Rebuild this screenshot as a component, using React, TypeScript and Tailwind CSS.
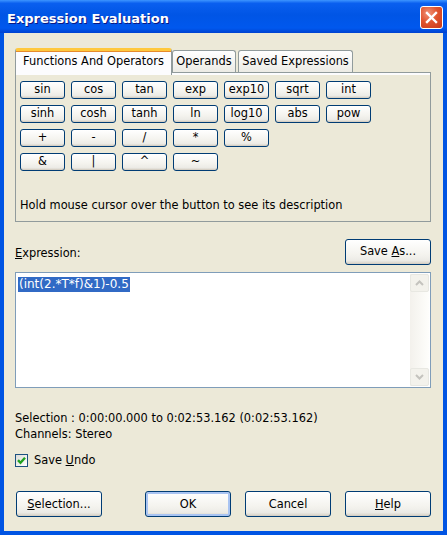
import React from 'react';

const font = "font-['Tahoma','DejaVu_Sans',sans-serif]";

function XpButton({
  children,
  className = '',
  isDefault = false,
}: {
  children: React.ReactNode;
  className?: string;
  isDefault?: boolean;
}) {
  return (
    <div
      className={`flex items-center justify-center border border-[#003c74] rounded-[3px] bg-[linear-gradient(180deg,#ffffff_0%,#f4f3ee_60%,#ecebe6_85%,#d6d0c5_100%)] text-black ${
        isDefault ? 'shadow-[inset_0_0_0_2px_#a9c4f2]' : 'shadow-[inset_0_-1px_0_#d6d0c5]'
      } ${className}`}
    >
      <span>{children}</span>
    </div>
  );
}

const rows = [
  ['sin', 'cos', 'tan', 'exp', 'exp10', 'sqrt', 'int'],
  ['sinh', 'cosh', 'tanh', 'ln', 'log10', 'abs', 'pow'],
  ['+', '-', '/', '*', '%'],
  ['&', '|', '^', '~'],
];

export default function App() {
  return (
    <div className={`w-[447px] h-[535px] flex flex-col bg-[#0054e3] ${font} text-[11.4px] text-black`}>
      {/* Title bar */}
      <div className="h-[33px] shrink-0 flex items-center justify-between pl-[7px] pr-[5px] bg-[linear-gradient(180deg,#3d95ff_0%,#0a5fef_10%,#0055e5_45%,#0058ee_85%,#0042d0_100%)]">
        <span className="text-white font-bold text-[13px] font-['DejaVu_Sans',sans-serif] [text-shadow:1px_1px_0_#0a1883] pt-[5px]">
          Expression Evaluation
        </span>
        <div className="w-[23px] h-[23px] mt-[1px] mr-[-1px] rounded-[3px] border border-white bg-[radial-gradient(circle_at_35%_30%,#f0947a_0%,#e0542e_45%,#c8391a_100%)] flex items-center justify-center">
          <svg width="13" height="13" viewBox="0 0 13 13">
            <path d="M2 2 L11 11 M11 2 L2 11" stroke="white" strokeWidth="2.4" strokeLinecap="square" />
          </svg>
        </div>
      </div>

      {/* Body */}
      <div className="flex-1 mx-[4px] mb-[4px] bg-[#ece9d8] pl-[11px] pr-[12px] pt-[15px] flex flex-col">
        {/* Tabs */}
        <div className="h-[24px] flex items-start">
          <div className="relative z-10 h-[27px] w-[157px] bg-[#fcfcfe] border-x border-[#919b9c] rounded-t-[3px] border-t-[3px] border-t-[#ffc83c] shadow-[inset_0_1px_0_#e68b2c] flex items-center justify-center pb-[2px]">
            Functions And Operators
          </div>
          <div className="mt-[2px] h-[22px] w-[64px] bg-[linear-gradient(180deg,#ffffff,#ecebe5)] border border-b-0 border-[#919b9c] rounded-t-[3px] flex items-center justify-center">
            Operands
          </div>
          <div className="ml-[2px] mt-[2px] h-[22px] w-[115px] bg-[linear-gradient(180deg,#ffffff,#ecebe5)] border border-b-0 border-[#919b9c] rounded-t-[3px] flex items-center justify-center">
            Saved Expressions
          </div>
        </div>
        <div className="h-[150px] border border-[#919b9c] bg-[#ece9d8] shadow-[inset_0_2px_0_#fcfcfe] pl-[4px] pt-[8px] flex flex-col">
          <div className="flex flex-col gap-[6px]">
            {rows.map((row, i) => (
              <div key={i} className="flex gap-[6px]">
                {row.map((b) => (
                  <XpButton key={b} className="w-[45px] h-[18px]">
                    {b}
                  </XpButton>
                ))}
              </div>
            ))}
          </div>
          <div className="mt-[26px]">Hold mouse cursor over the button to see its description</div>
        </div>

        {/* Expression */}
        <div className="mt-[17px] flex items-end justify-between">
          <span className="mb-[3px]">
            <span className="underline">E</span>xpression:
          </span>
          <XpButton className="w-[86px] h-[26px]">
            Save <span className="underline">A</span>s...
          </XpButton>
        </div>
        <div className="mt-[7px] h-[116px] border border-[#7f9db9] bg-white flex">
          <div className="flex-1 pl-[2px] pt-[3px]">
            <span className="bg-[#316ac5] text-white text-[12px] px-[1px] leading-[15px] inline-block">(int(2.*T*f)&amp;1)-0.5</span>
          </div>
          <div className="w-[19px] mr-[1px] my-[1px] flex flex-col justify-between bg-[linear-gradient(90deg,#f3f1ec,#fefefb)]">
            <div className="h-[18px] border border-[#e8e8e2] rounded-[2px] bg-[#f3f2ec] flex items-center justify-center">
              <svg width="9" height="6" viewBox="0 0 9 6">
                <path d="M1 5 L4.5 1.5 L8 5" stroke="#c4c3be" strokeWidth="2" fill="none" />
              </svg>
            </div>
            <div className="h-[18px] border border-[#e8e8e2] rounded-[2px] bg-[#f3f2ec] flex items-center justify-center">
              <svg width="9" height="6" viewBox="0 0 9 6">
                <path d="M1 1 L4.5 4.5 L8 1" stroke="#c4c3be" strokeWidth="2" fill="none" />
              </svg>
            </div>
          </div>
        </div>

        {/* Info */}
        <div className="mt-[22px] leading-[16px]">
          <div>Selection : 0:00:00.000 to 0:02:53.162 (0:02:53.162)</div>
          <div>Channels: Stereo</div>
        </div>
        <div className="mt-[10px] flex items-center gap-[6px]">
          <div className="w-[13px] h-[13px] border border-[#1c5180] bg-[linear-gradient(135deg,#dcdcd7,#ffffff)] flex items-center justify-center">
            <svg width="9" height="9" viewBox="0 0 9 9">
              <path d="M1 4.2 L3.5 6.8 L8 1.8" stroke="#21a121" strokeWidth="2.4" fill="none" />
            </svg>
          </div>
          <span>
            Save <span className="underline">U</span>ndo
          </span>
        </div>

        {/* Buttons */}
        <div className="mt-[22px] flex items-center">
          <XpButton className="ml-[1px] w-[86px] h-[26px]">
            <span className="underline">S</span>election...
          </XpButton>
          <div className="ml-auto flex gap-[14px]">
            <XpButton isDefault className="w-[86px] h-[26px]">
              OK
            </XpButton>
            <XpButton className="w-[86px] h-[26px]">Cancel</XpButton>
            <XpButton className="w-[86px] h-[26px]">
              <span className="underline">H</span>elp
            </XpButton>
          </div>
        </div>
      </div>
    </div>
  );
}
